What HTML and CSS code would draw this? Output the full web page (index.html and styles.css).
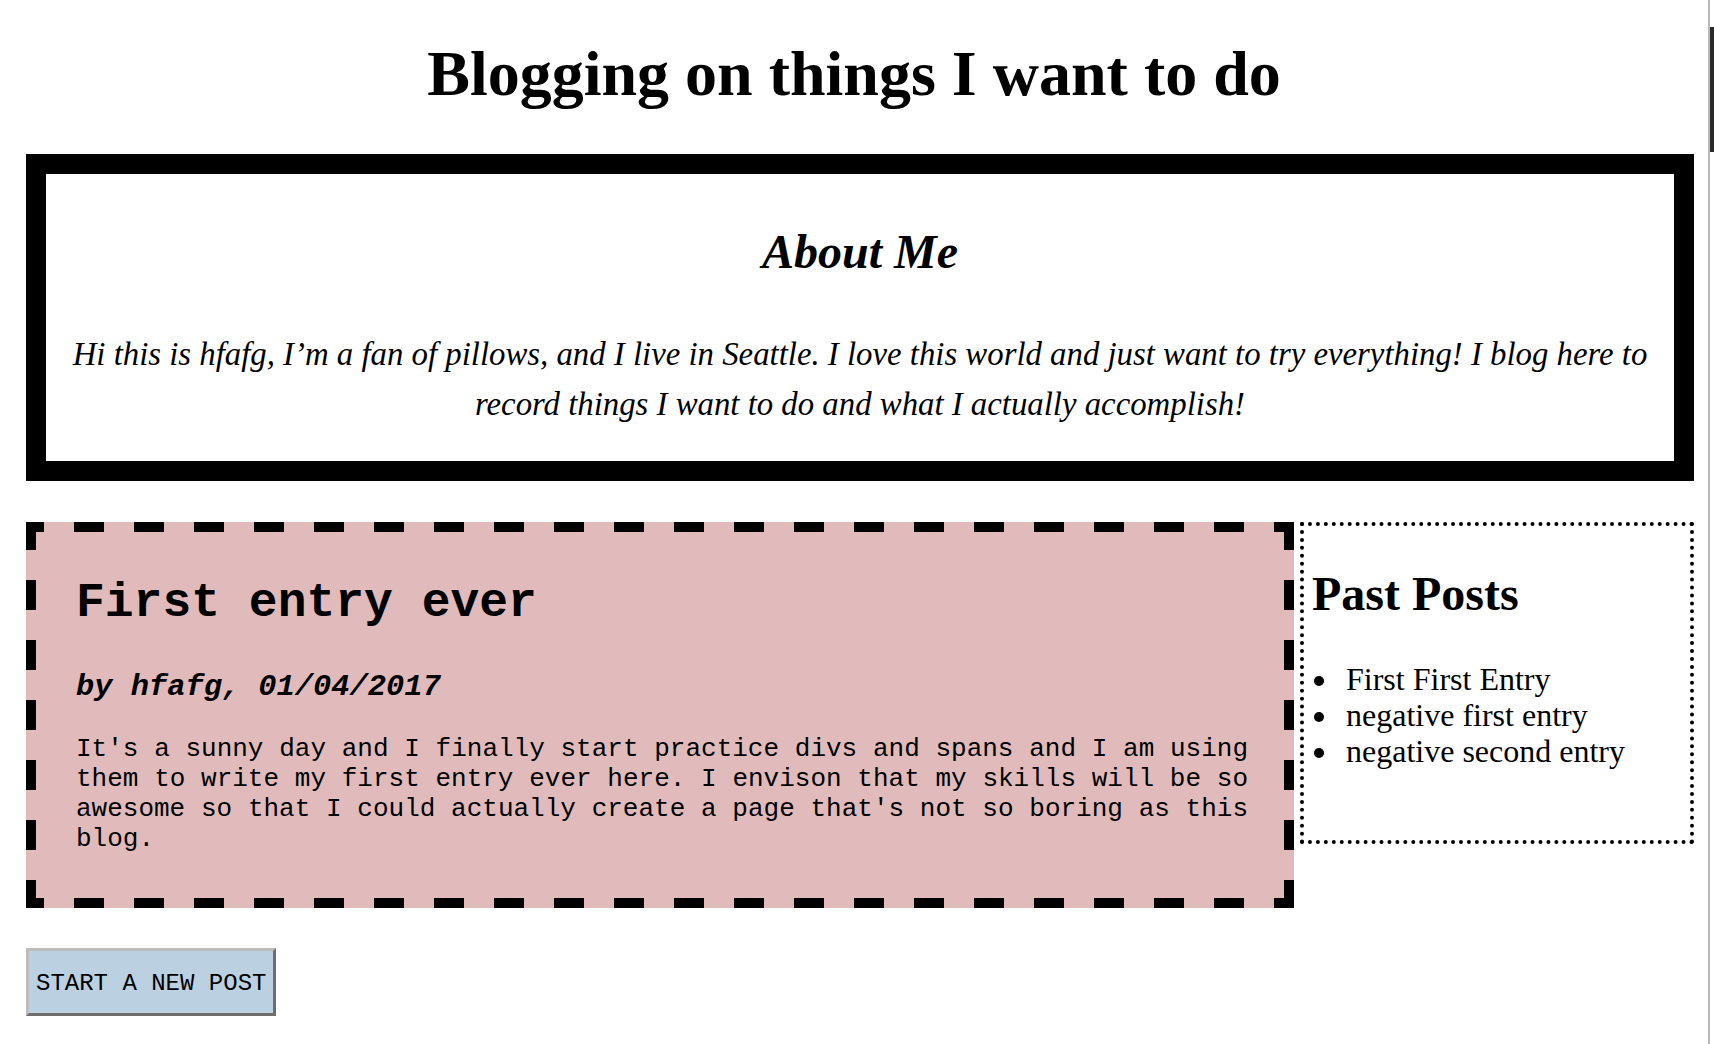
FILE: index.html
```html
<!DOCTYPE html>
<html lang="en">
<head>
<meta charset="utf-8">
<title>Blogging on things I want to do</title>
<link rel="stylesheet" href="styles.css">
</head>
<body>
<div class="window">
  <div class="page">
    <h1 class="site-title">Blogging on things I want to do</h1>

    <section class="about">
      <h2 class="about-title">About Me</h2>
      <p class="about-text">Hi this is hfafg, I’m a fan of pillows, and I live in Seattle. I love this world and just want to try everything! I blog here to record things I want to do and what I actually accomplish!</p>
    </section>

    <div class="content-row">
      <article class="post">
        <h2 class="post-title">First entry ever</h2>
        <h3 class="post-byline">by hfafg, 01/04/2017</h3>
        <p class="post-body">It's a sunny day and I finally start practice divs and spans and I am using them to write my first entry ever here. I envison that my skills will be so awesome so that I could actually create a page that's not so boring as this blog.</p>
      </article>

      <aside class="sidebar">
        <h2 class="sidebar-title">Past Posts</h2>
        <ul class="past-list">
          <li>First First Entry</li>
          <li>negative first entry</li>
          <li>negative second entry</li>
        </ul>
      </aside>
    </div>

    <button class="new-post-btn" type="button">START A NEW POST</button>
  </div>
  <div class="window-edge">
    <div class="edge-gap"></div>
    <div class="edge-dark"></div>
  </div>
</div>
</body>
</html>
```

FILE: styles.css
```css
html, body {
  margin: 0;
  padding: 0;
  background: #ffffff;
}

body {
  font-family: "Liberation Serif", "Times New Roman", serif;
  color: #000000;
}

.window {
  display: flex;
  width: 1714px;
  min-height: 1044px;
}

.page {
  width: 1708px;
  box-sizing: border-box;
  padding: 8px;
}

.window-edge {
  width: 6px;
  border-left: 2px solid #b9b9b9;
  box-sizing: border-box;
  display: flex;
  flex-direction: column;
}

.edge-gap {
  height: 27px;
}

.edge-dark {
  height: 125px;
  background: #2a2a2a;
}

.site-title {
  font-family: "Liberation Serif", "Times New Roman", serif;
  font-weight: bold;
  font-size: 64px;
  text-align: center;
  margin: 29px 0 43px;
}

.about {
  margin: 0 6px 41px 18px;
  border: 20px solid #000000;
  padding: 0 20px;
  text-align: center;
  background: #ffffff;
}

.about-title {
  font-family: "Liberation Serif", "Times New Roman", serif;
  font-style: italic;
  font-weight: bold;
  font-size: 48px;
  margin: 50px 0 0;
}

.about-text {
  font-family: "Liberation Serif", "Times New Roman", serif;
  font-style: italic;
  font-size: 32.8px;
  line-height: 50px;
  margin: 50px 0 32px;
}

.content-row {
  display: flex;
  align-items: flex-start;
  gap: 6px;
  margin: 0 6px 40px 18px;
}

/* dashed 10px border drawn as 30px dashes / 30px gaps, like the reference */
.post {
  width: 1268px;
  height: 386px;
  flex: none;
  box-sizing: border-box;
  border: 10px solid transparent;
  background-color: #e1bbbb;
  background-image:
    repeating-linear-gradient(to right, #000 0 18px, transparent 18px 48px, #000 48px 60px),
    repeating-linear-gradient(to right, #000 0 18px, transparent 18px 48px, #000 48px 60px),
    repeating-linear-gradient(to bottom, #000 0 28px, transparent 28px 58px, #000 58px 60px),
    repeating-linear-gradient(to bottom, #000 0 28px, transparent 28px 58px, #000 58px 60px);
  background-size: 100% 10px, 100% 10px, 10px 100%, 10px 100%;
  background-position: left top, left bottom, left top, right top;
  background-repeat: no-repeat;
  background-origin: border-box;
  background-clip: border-box;
  padding: 4px 36px 0 40px;
  font-family: "Liberation Mono", "Courier New", monospace;
  font-size: 26px;
}

.post-title {
  font-family: "Liberation Mono", "Courier New", monospace;
  font-weight: bold;
  font-size: 48px;
  margin: 40px 0;
}

.post-byline {
  font-family: "Liberation Mono", "Courier New", monospace;
  font-weight: bold;
  font-style: italic;
  font-size: 30.4px;
  margin: 30px 0;
}

.post-body {
  font-size: 26px;
  line-height: 30px;
  text-align: justify;
  margin: 26px 0;
}

.sidebar {
  flex: 1;
  box-sizing: border-box;
  border: 4px dotted #000000;
  background: #ffffff;
  padding: 0 8px 39px;
}

.sidebar-title {
  font-family: "Liberation Serif", "Times New Roman", serif;
  font-weight: bold;
  font-size: 48px;
  margin: 40px 0;
}

.past-list {
  font-size: 32px;
  line-height: 36px;
  margin: 32px 0;
  padding-left: 28px;
}

.past-list li {
  padding-left: 6px;
}

.new-post-btn {
  display: block;
  margin-left: 18px;
  font-family: "Liberation Mono", "Courier New", monospace;
  font-size: 24px;
  color: #000000;
  background: #bbd0e1;
  border-style: solid;
  border-width: 3px;
  border-color: #bdbdbd #6e6e6e #6e6e6e #bdbdbd;
  padding: 19px 7px 16px;
  border-radius: 0;
}
```
